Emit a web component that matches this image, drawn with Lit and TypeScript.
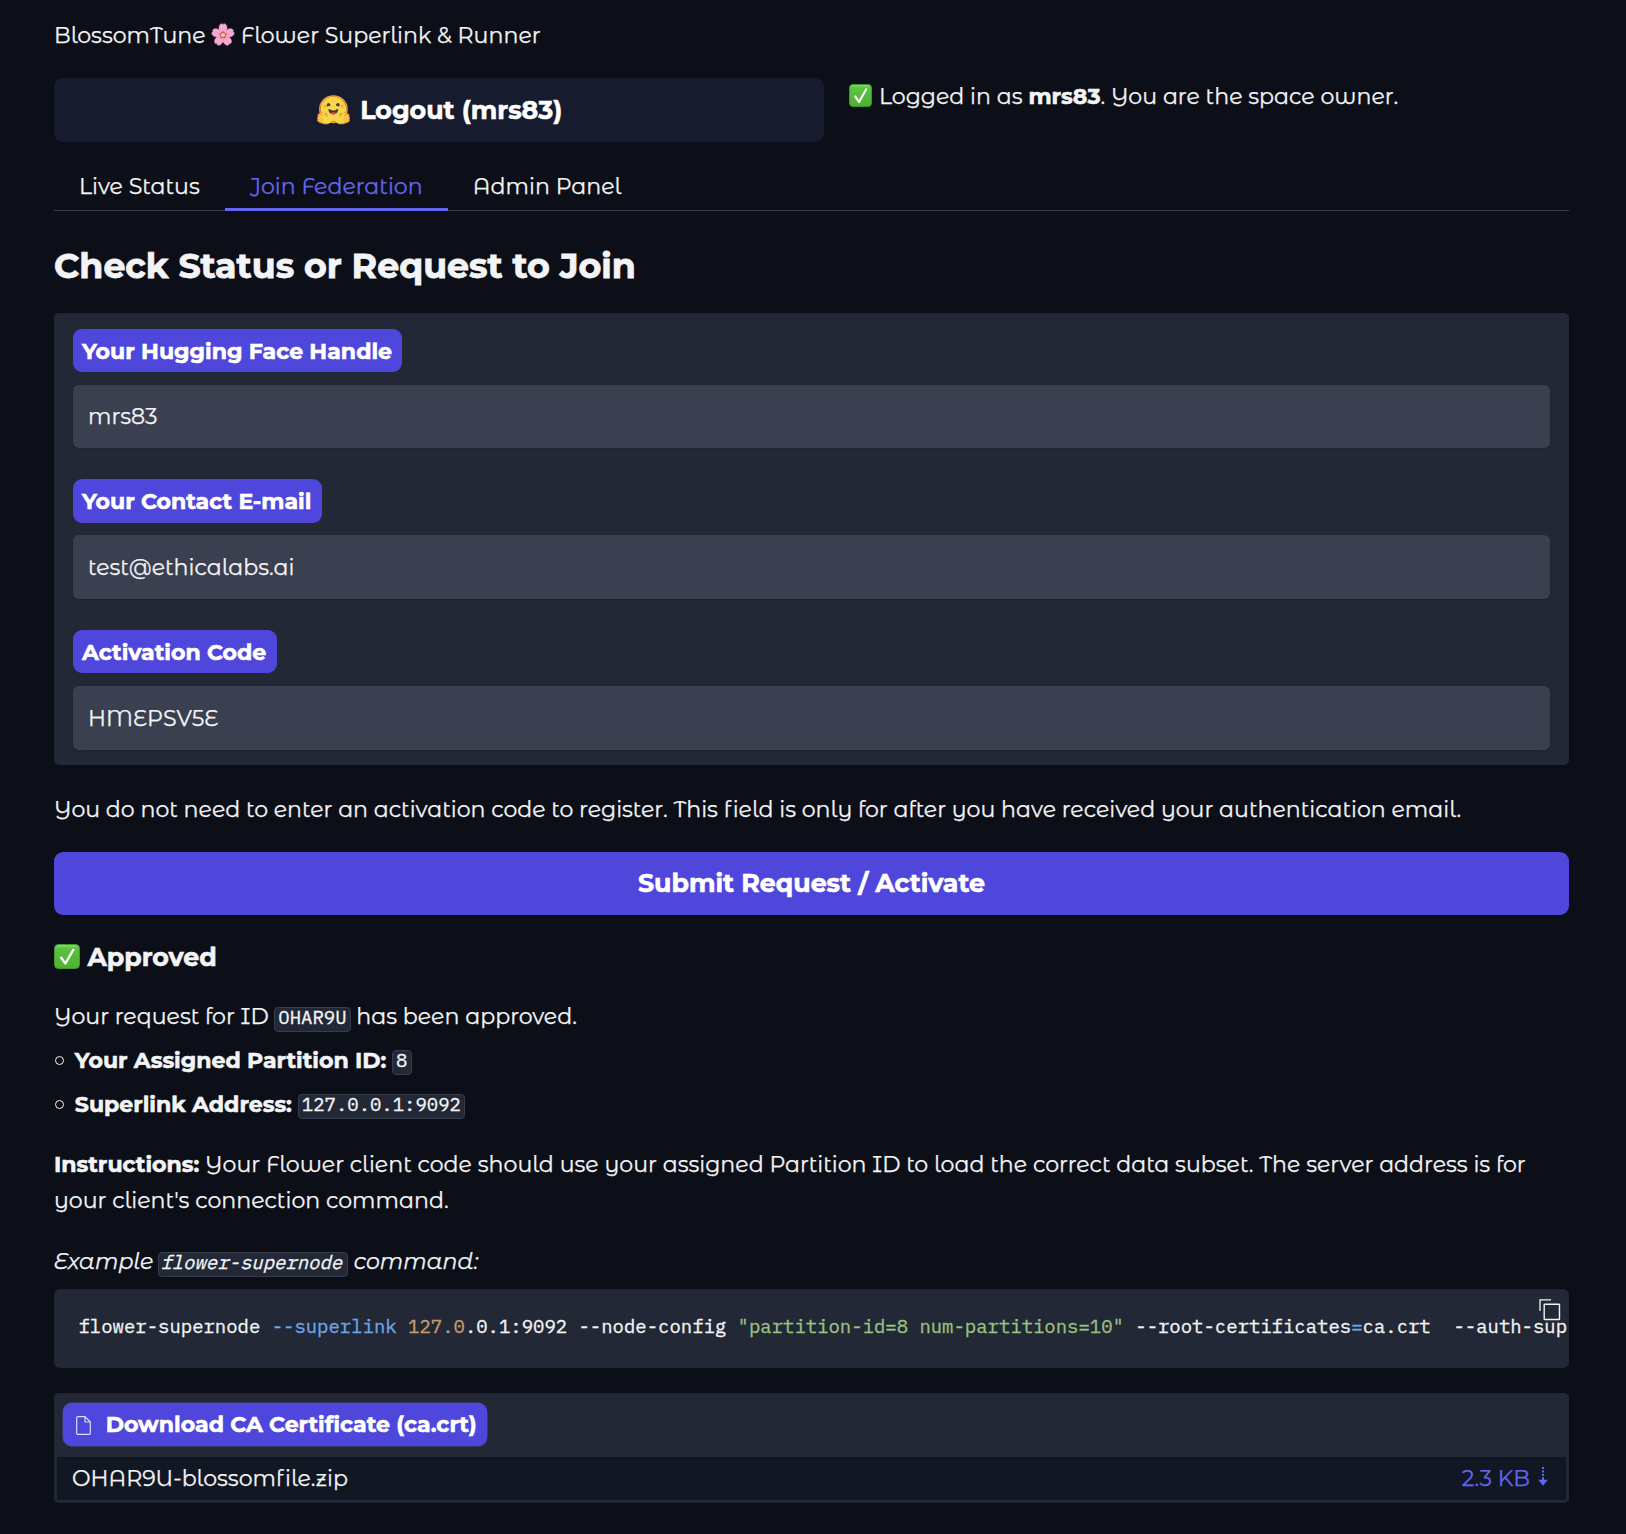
import { LitElement, html, css, svg } from "lit";
import { customElement } from "lit/decorators.js";

const FIELDS = [
  { label: "Your Hugging Face Handle", value: "mrs83" },
  { label: "Your Contact E-mail", value: "test@ethicalabs.ai" },
  { label: "Activation Code", value: "HMEPSV5E" },
];

const TABS = ["Live Status", "Join Federation", "Admin Panel"];
const ACTIVE_TAB = "Join Federation";

const petal = (angle: number) => svg`
  <g transform="rotate(${angle} 12 12)">
    <path d="M12 12.4C8.6 9.6 7.2 5.6 8.4 2.6C9 1.1 10.4.4 11.3.8L12 1.7L12.7.8C13.6.4 15 1.1 15.6 2.6C16.8 5.6 15.4 9.6 12 12.4Z" fill="#f5a9d0" stroke="#e58bbd" stroke-width=".5"/>
    <path d="M12 12L11.2 7.4L12 8.4L12.8 7.4Z" fill="#cf4f86"/>
  </g>`;

const blossom = html`<svg class="blossom" viewBox="0 0 24 24">
  ${[0, 72, 144, 216, 288].map(petal)}
  <circle cx="12" cy="12" r="2.900" fill="#c4527f"/>
  <circle cx="12" cy="12" r="2.100" fill="#f7d35a"/>
</svg>`;

const check = (cls: string) => html`<svg class=${cls} viewBox="0 0 26 25" preserveAspectRatio="none">
  <defs>
    <linearGradient id="g" x1="0" y1="0" x2="0" y2="1">
      <stop offset="0" stop-color="#8fdc77"/><stop offset=".16" stop-color="#5cc342"/><stop offset="1" stop-color="#4db031"/>
    </linearGradient>
  </defs>
  <rect x=".5" y=".5" width="25" height="24" rx="4" fill="url(#g)" stroke="#3f9a2b"/>
  <path d="M5.600 13.400L7.700 12.200L11.200 17.400L18.800 4.500L20.900 5.200L12.200 20.600H10.700Z" fill="#fff"/>
</svg>`;

const huggingFace = html`<svg class="hug" viewBox="3 2.500 89 86" preserveAspectRatio="none">
  <path d="M47.2 76.5a34.75 34.75 0 1 0 0-69.5 34.75 34.75 0 0 0 0 69.5Z" fill="#f9d54a"/>
  <path d="M82 41.8a34.75 34.75 0 1 0-69.5 0 34.75 34.75 0 0 0 69.5 0Zm-73.5 0a38.75 38.75 0 1 1 77.5 0 38.75 38.75 0 0 1-77.5 0Z" fill="#f09f3a"/>
  <path d="M58.5 32.3c1.28.44 1.78 3.06 3.07 2.38a5 5 0 1 0-6.76-2.07c.61 1.15 2.55-.72 3.7-.32ZM34.95 32.3c-1.28.44-1.79 3.06-3.07 2.38a5 5 0 1 1 6.76-2.07c-.61 1.15-2.56-.72-3.7-.32Z" fill="#3a3b45"/>
  <path d="M46.96 56.29c9.83 0 13-8.76 13-13.26 0-2.34-1.57-1.6-4.09-.36-2.33 1.15-5.46 2.74-8.9 2.74-7.19 0-13-6.88-13-2.38s3.16 13.26 13 13.26Z" fill="#3a3b45"/>
  <path d="M39.43 54a8.7 8.7 0 0 1 5.3-4.49c.4-.12.81.57 1.24 1.28.4.68.82 1.37 1.24 1.37.45 0 .9-.68 1.33-1.35.45-.7.89-1.38 1.32-1.25a8.61 8.61 0 0 1 5 4.17c-2.200 1.900-8 3-15.430.270Z" fill="#eb4e3d"/>
  <path d="M70.71 37a3.25 3.25 0 1 0 0-6.5 3.25 3.25 0 0 0 0 6.5ZM24.21 37a3.25 3.25 0 1 0 0-6.5 3.25 3.25 0 0 0 0 6.5Z" fill="#f09f3a"/>
  <g id="hand">
    <path d="M17.500 48c-1.600 0-3.100.7-4.100 1.900a6 6 0 0 0-1.400 3.800 7 7 0 0 0-1.900-.3c-1.600 0-3 .6-4 1.700a5.800 5.800 0 0 0-.8 7 5.300 5.300 0 0 0-1.800 2.900c-.3 1-.5 3 .8 5a5.200 5.200 0 0 0-.4 4.800c1 2.200 3.300 3.900 7.900 5.700 2.800 1.100 5.400 1.800 5.400 1.900 3.800 1 7.200 1.500 10.100 1.500 5.400 0 9.200-1.700 11.500-4.900 3.600-5.300 3.100-10.200-1.600-14.900-2.600-2.600-4.300-6.400-4.700-7.200-.7-2.400-2.600-5.100-5.700-5.100a5.700 5.700 0 0 0-4.700 2.500 9 9 0 0 0-2.600-2.300A7.400 7.400 0 0 0 17.500 48Z" fill="#f09f3a"/>
    <path d="M17.500 52c1 0 2.200.4 3.500 1.300 4.300 2.800 7.500 10 10.500 10.600 1.500.2-2.500-9.800.3-10.100 1.900-.2 2.200 2 4.800 7.200 1.800 3.500 4.300 4.800 5.700 8 1.300 3 .5 6-1 8.200-2.500 3.600-10.200 4.200-18.100 2.200-7.300-2-14.900-4.300-15.500-7.100-.2-.9.2-1.900 1.200-2.500-1.700-1.200-2.600-2.700-2-4.300.4-1.200 1.700-1.700 2.700-1.500-1.600-1.700-2.300-3-1.600-4.600.7-1.500 2.500-2.300 4-1.300l8.900 6.200-5-8.700c-1-1.800-.4-3.600 1.600-3.600Z" fill="#f9d54a"/>
    <path d="M11 64l10 8M9.500 70l9 5" fill="none" stroke="#f09f3a" stroke-width="2"/>
  </g>
  <use href="#hand" transform="matrix(-1 0 0 1 95 0)"/>
</svg>`;

const fileIcon = html`<svg class="file-icon" viewBox="0 0 15 19" fill="none" stroke="#dcdcf8" stroke-width="1.200" stroke-linejoin="round">
  <path d="M9 .6H1.900A1.200 1.200 0 0 0 .7 1.800V17.200A1.200 1.200 0 0 0 1.900 18.400H13.100A1.200 1.200 0 0 0 14.300 17.200V6Z"/>
  <path d="M9 .6V6H14.300"/>
</svg>`;

const copyIcon = html`<svg class="copy" viewBox="0 0 22 22" fill="none" stroke="#f3f4f6">
  <rect x="5.200" y="5.200" width="15.300" height="15.300" rx=".6" stroke-width="1.400"/>
  <path d="M12 .9H1V12" stroke-width="1.300"/>
</svg>`;

const downArrow = html`<svg class="arrow" viewBox="0 0 10 19" fill="#6366f1">
  <rect x="4" y="0" width="2" height="2"/><rect x="4" y="3.400" width="2" height="2"/>
  <rect x="4" y="6.800" width="2" height="2"/><rect x="4" y="10.200" width="2" height="3"/>
  <path d="M.2 12.800H9.800L5 18.700Z"/>
</svg>`;

@customElement("app-root")
export class AppRoot extends LitElement {
  static styles = css`
    :host {
      display: block;
      box-sizing: border-box;
      min-height: 1534px;
      padding: 18px 57px 0 54px;
      background: #0c0f18;
      color: #f3f4f6;
      font: 400 22.1px/36px "Montserrat Alternates", "Montserrat", sans-serif;
      -webkit-text-stroke: .25px;
    }
    * { box-sizing: border-box; }
    p, h2, h3, ul { margin: 0; padding: 0; }
    svg { display: block; flex: none; }
    strong, h2, h3, .label, .button { font-family: "Montserrat", "Inter", sans-serif; font-weight: 700; -webkit-text-stroke: .55px; }
    .title { display: flex; }
    .blossom { width: 24px; height: 24px; margin: 4.500px 6px 0 5.200px; }
    .top { display: grid; grid-template-columns: 770px 1fr; gap: 25px; margin-top: 24px; }
    .button { display: flex; align-items: center; justify-content: center; border-radius: 9px; color: #fff; font-size: 25.300px; }
    .logout { height: 64px; background: #161c2d; gap: 10.500px; padding-left: 1px; }
    .hug { width: 33px; height: 31px; }
    .user { display: flex; padding-top: 1px; white-space: pre; }
    .check-small { width: 23px; height: 23px; margin: 5px 7px 0 0; }
    .tabs { display: flex; height: 49px; margin-top: 20px; box-shadow: inset 0 -1px #373e4d; }
    .tab { padding: 7px 25.200px 0 25px; }
    .active { color: #6366e8; box-shadow: inset 0 -3px #6366f1; }
    h2 { margin-top: 32px; font-size: 34.800px; line-height: 46px; -webkit-text-stroke: .8px; }
    .form { height: 452px; margin-top: 24px; padding: 16px 19px 15px; border-radius: 5px; background: #222835; }
    .field { height: 119.450px; }
    .field + .field { margin-top: 31px; }
    .label { display: flex; align-items: center; width: fit-content; height: 43.600px; padding: 2px 10.300px 0 9px; border-radius: 9px; background: #4f46dc; color: #fff; }
    .field:first-child .label { height: 43.400px; margin-bottom: .2px; }
    .input { height: 63.450px; margin-top: 12.400px; padding: 0 15px; border-radius: 6px; background: #3b4050; line-height: 65px; box-shadow: 0 1px 3px rgba(0,0,0,.12); }
    .field:first-child .input { line-height: 64px; }
    .field:last-child .input { height: 64px; }
    .info { margin-top: 27px; letter-spacing: -.012px; }
    .submit { height: 63px; margin-top: 24px; padding-bottom: 1px; background: #4f46dc; }
    h3 { display: flex; align-items: center; margin-top: 22.500px; font-size: 25.300px; line-height: 38px; }
    .check-big { width: 26px; height: 25px; margin: 0 7.400px 0 0; }
    .request { margin-top: 23.500px; }
    code { font: 400 18.960px/19px "IBM Plex Mono", "Liberation Mono", monospace; -webkit-text-stroke: .3px; }
    .chip { display: inline-block; height: 25px; margin: 0 -.3px -8px; padding: 0 3.200px; border: 1px solid #363d4b; border-radius: 4px; background: #222835; }
    li { display: flex; align-items: baseline; gap: 6px; height: 36px; margin-top: 8px; list-style: none; }
    li .chip { transform: translateY(-1px); }
    .dot { width: 9px; height: 9px; margin: 0 4.800px 0 1px; border: 1px solid #f3f4f6; border-radius: 50%; transform: translateY(-3px); }
    .instructions { margin-top: 24px; }
    .example { margin-top: 24.500px; font-style: italic; height: 36px; }
    .example .chip { margin-left: -1px; font-style: normal; }
    .slant { display: inline-block; transform: skewX(-14deg); }
    .block { position: relative; height: 79px; margin-top: 9.500px; padding: 22px 0 0 24.500px; overflow: hidden; border-radius: 6px; background: #222835; white-space: pre; line-height: 31px; }
    .block code { display: block; line-height: 31px; }
    .flag { color: #6ea5e6; }
    .num { color: #c69a6b; }
    .str { color: #9bc17f; }
    .copy { position: absolute; top: 10px; right: 7.700px; width: 22px; height: 22px; }
    .file { margin-top: 25px; padding: 10px 3px 3px; border-radius: 5px; background: #222835; }
    .file .label { margin-left: 6.200px; padding: 1px 10.300px 0 13px; height: 43.400px; box-shadow: 0 0 0 .5px #4a4a9a; }
    .file-icon { width: 15px; height: 19px; margin-right: 14.500px; }
    .row { display: flex; height: 43px; margin-top: 10.600px; padding: 0 18px 0 15px; background: #121724; line-height: 43px; }
    .name { flex: 1; }
    .size { display: flex; color: #6366e8; }
    .arrow { width: 10px; height: 19px; margin: 10.500px 0 0 8px; }
  `;

  render() {
    return html`
      <div class="title"><span>BlossomTune</span>${blossom}<span>Flower Superlink &amp; Runner</span></div>
      <div class="top">
        <div class="button logout">${huggingFace}<span>Logout (mrs83)</span></div>
        <div class="user">${check("check-small")}<span>Logged in as <strong>mrs83</strong>. You are the space owner.</span></div>
      </div>
      <nav class="tabs">${TABS.map((t) => html`<div class="tab ${t === ACTIVE_TAB ? "active" : ""}">${t}</div>`)}</nav>
      <h2>Check Status or Request to Join</h2>
      <section class="form">
        ${FIELDS.map((f) => html`<div class="field"><div class="label">${f.label}</div><div class="input">${f.value}</div></div>`)}
      </section>
      <p class="info">You do not need to enter an activation code to register. This field is only for after you have received your authentication email.</p>
      <div class="button submit">Submit Request / Activate</div>
      <h3>${check("check-big")}Approved</h3>
      <p class="request">Your request for ID <code class="chip">OHAR9U</code> has been approved.</p>
      <ul>
        <li><span class="dot"></span><strong>Your Assigned Partition ID:</strong><code class="chip">8</code></li>
        <li><span class="dot"></span><strong>Superlink Address:</strong><code class="chip">127.0.0.1:9092</code></li>
      </ul>
      <p class="instructions"><strong>Instructions:</strong> Your Flower client code should use your assigned Partition ID to load the correct data subset. The server address is for your client's connection command.</p>
      <p class="example">Example <code class="chip"><span class="slant">flower-supernode</span></code> command:</p>
      <div class="block"><code>flower-supernode <span class="flag">--superlink</span> <span class="num">127.0</span>.0.1:9092 --node-config <span class="str">"partition-id=8 num-partitions=10"</span> --root-certificates<span class="flag">=</span>ca.crt  --auth-sup</code>${copyIcon}</div>
      <section class="file">
        <div class="label">${fileIcon}<span>Download CA Certificate (ca.crt)</span></div>
        <div class="row"><span class="name">OHAR9U-blossomfile.zip</span><span class="size">2.3 KB${downArrow}</span></div>
      </section>
    `;
  }
}
